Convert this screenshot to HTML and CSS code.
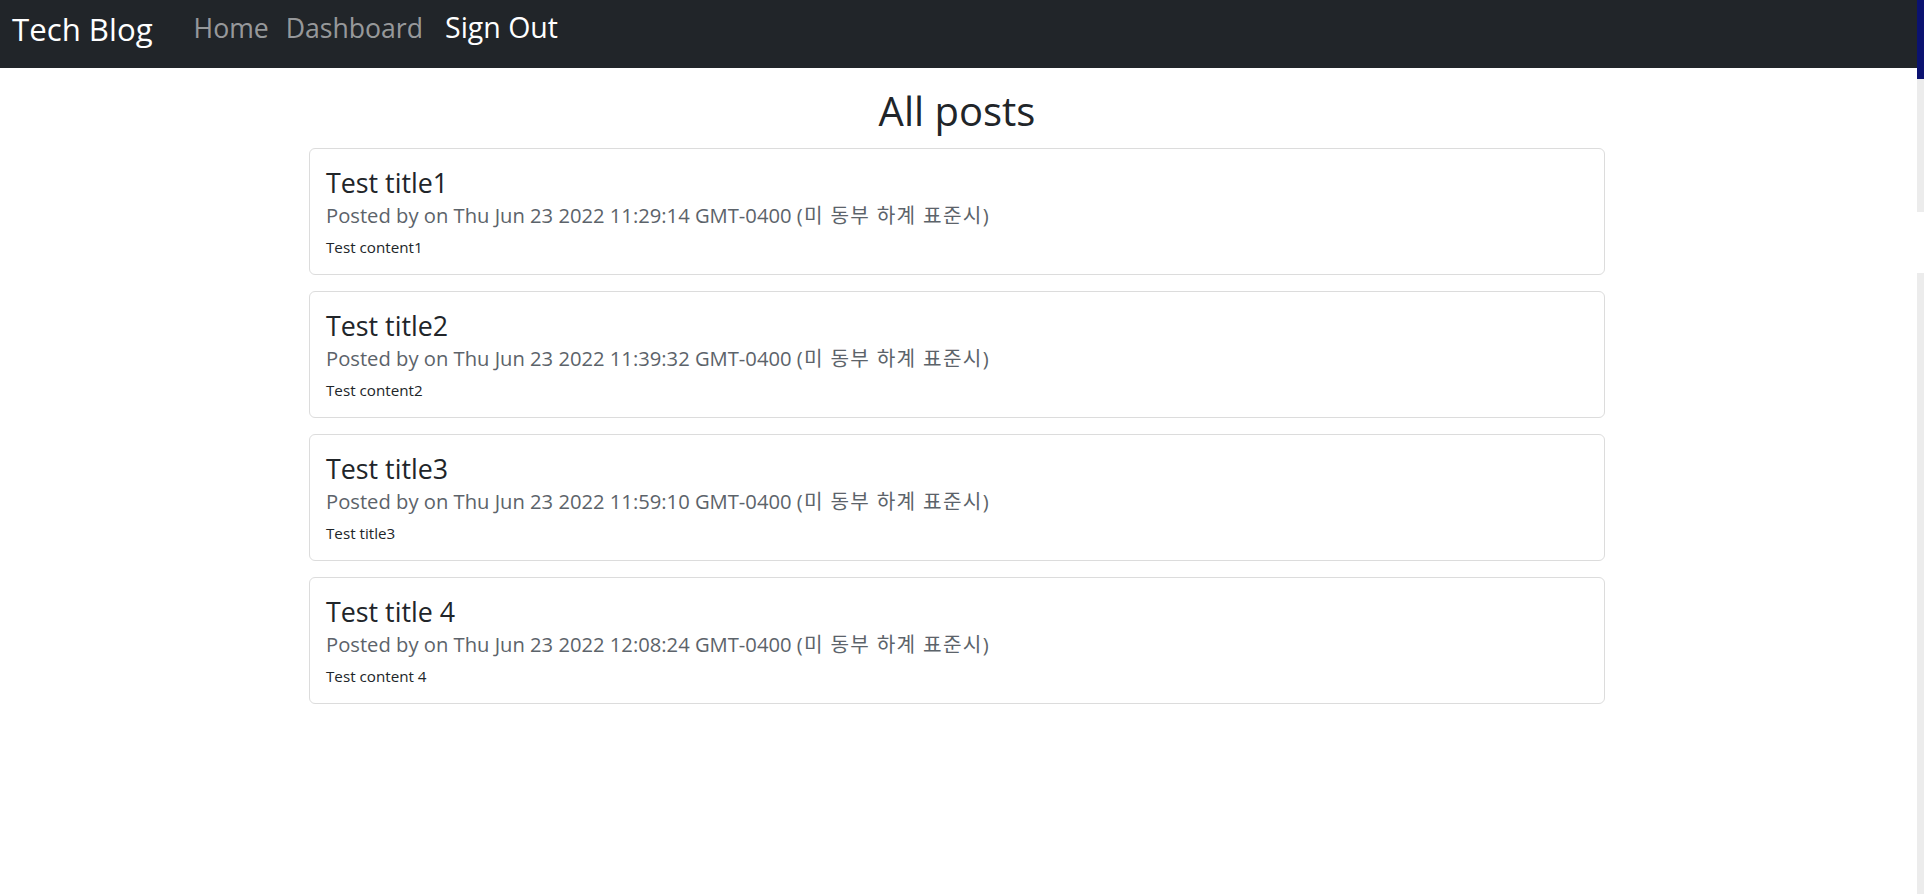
FILE: index.html
```html
<!DOCTYPE html>
<html lang="ko">
<head>
<meta charset="utf-8">
<title>Tech Blog</title>
<link rel="stylesheet" href="styles.css">
</head>
<body>
<div class="page">
  <div class="main">
    <nav class="navbar">
      <a class="brand" href="#">Tech Blog</a>
      <a class="nav-link home" href="#">Home</a>
      <a class="nav-link dash" href="#">Dashboard</a>
      <a class="nav-link signout" href="#">Sign Out</a>
    </nav>
    <div class="content">
      <h1 class="page-title">All posts</h1>
      <div class="card">
        <h3 class="card-title">Test title1</h3>
        <h5 class="card-subtitle">Posted by on Thu Jun 23 2022 11:29:14 GMT-0400 <span class="tz">(미 동부 하계 표준시)</span></h5>
        <p class="card-text">Test content1</p>
      </div>
      <div class="card">
        <h3 class="card-title">Test title2</h3>
        <h5 class="card-subtitle">Posted by on Thu Jun 23 2022 11:39:32 GMT-0400 <span class="tz">(미 동부 하계 표준시)</span></h5>
        <p class="card-text">Test content2</p>
      </div>
      <div class="card">
        <h3 class="card-title">Test title3</h3>
        <h5 class="card-subtitle">Posted by on Thu Jun 23 2022 11:59:10 GMT-0400 <span class="tz">(미 동부 하계 표준시)</span></h5>
        <p class="card-text">Test title3</p>
      </div>
      <div class="card">
        <h3 class="card-title">Test title 4</h3>
        <h5 class="card-subtitle">Posted by on Thu Jun 23 2022 12:08:24 GMT-0400 <span class="tz">(미 동부 하계 표준시)</span></h5>
        <p class="card-text">Test content 4</p>
      </div>
    </div>
  </div>
  <aside class="strip">
    <div class="strip-navy"></div>
    <div class="strip-gray1"></div>
    <div class="strip-white"></div>
    <div class="strip-gray2"></div>
  </aside>
</div>
</body>
</html>
```

FILE: styles.css
```css
html, body {
  margin: 0;
  padding: 0;
  background: #fff;
}

body {
  font-family: "Open Sans", "Noto Sans CJK KR", sans-serif;
  color: #212529;
}

.page {
  display: flex;
  min-height: 894px;
}

.main {
  flex: 1;
  min-width: 0;
}

/* navbar */
.navbar {
  height: 68px;
  box-sizing: border-box;
  background: #212529;
  display: flex;
  align-items: flex-start;
  padding: 7px 0 0 12px;
}

.navbar a {
  text-decoration: none;
  white-space: nowrap;
}

.brand {
  color: #fff;
  font-size: 31.2px;
  line-height: 40px;
  margin: 2px 41px 0 0;
}

.nav-link {
  color: rgba(255, 255, 255, 0.55);
  font-size: 26.6px;
  line-height: 40px;
  margin-top: 1px;
}

.nav-link.home {
  margin-right: 17px;
}

.nav-link.dash {
  margin-right: 22px;
}

.nav-link.signout {
  color: #fff;
  font-size: 28.5px;
  margin-top: 0;
}

/* content */
.content {
  max-width: 1296px;
  margin: 0 auto;
  padding-right: 3px;
  box-sizing: content-box;
}

.page-title {
  margin: 19px 0 13px;
  text-align: center;
  font-size: 40px;
  line-height: 48px;
  font-weight: 400;
}

.card {
  border: 1px solid #dcdcdc;
  border-radius: 6px;
  padding: 17px 16px 15px;
  margin-bottom: 16px;
}

.card-title {
  margin: 0;
  font-size: 26.8px;
  line-height: 34px;
  font-weight: 400;
}

.card-subtitle {
  margin: 3px 0 0;
  font-size: 20.2px;
  line-height: 24px;
  font-weight: 400;
  color: #5c636a;
}

.card-subtitle .tz {
  letter-spacing: 1.3px;
}

.card-text {
  margin: 8px 0 0;
  font-size: 15.2px;
  line-height: 24px;
}

/* right edge strip */
.strip {
  width: 7px;
  flex: none;
  display: flex;
  flex-direction: column;
}

.strip-navy {
  height: 79px;
  background: #0b1270;
}

.strip-gray1 {
  height: 133px;
  background: #ececec;
}

.strip-white {
  height: 61px;
  background: #fff;
}

.strip-gray2 {
  flex: 1;
  background: #ececec;
}
```
